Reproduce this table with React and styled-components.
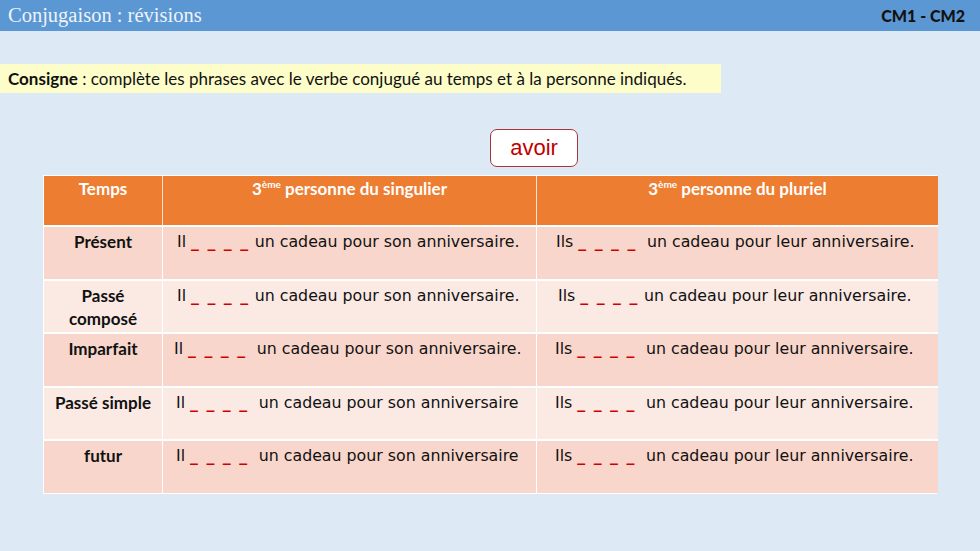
import React from "react";
import styled, { createGlobalStyle } from "styled-components";

const Global = createGlobalStyle`
  html, body { margin: 0; padding: 0; }
  body { background: #dde9f5; }
  #root { width: 980px; height: 551px; overflow: hidden; }
`;

const Page = styled.div`
  width: 980px;
  height: 551px;
  background: #dde9f5;
  display: flex;
  flex-direction: column;
`;

const TopBar = styled.header`
  height: 31px;
  background: #5b97d3;
  display: flex;
  align-items: center;
  justify-content: space-between;
  padding: 0 15px 0 8px;
`;

const Title = styled.h1`
  margin: 0;
  font-family: "Liberation Serif", "DejaVu Serif", serif;
  font-weight: normal;
  font-size: 20.5px;
  color: #eef3fa;
`;

const Level = styled.div`
  font-family: Lato, "Open Sans", sans-serif;
  font-weight: 900;
  font-size: 16px;
  color: #111;
`;

const Instruction = styled.div`
  margin-top: 33px;
  width: 721px;
  height: 29px;
  box-sizing: border-box;
  background: #fdfdc9;
  display: flex;
  align-items: center;
  padding-left: 8px;
  font-family: Lato, "Open Sans", sans-serif;
  font-size: 17px;
  color: #111;
  b { font-weight: 700; }
`;

const VerbRow = styled.div`
  display: flex;
  justify-content: center;
  margin-top: 36px;
  padding-left: 88px;
`;

const VerbBox = styled.div`
  width: 88px;
  height: 38px;
  box-sizing: border-box;
  background: #fff;
  border: 1.5px solid #a8343c;
  border-radius: 7px;
  display: flex;
  align-items: center;
  justify-content: center;
  font-family: "Liberation Sans", Arial, sans-serif;
  font-size: 22px;
  color: #c00000;
`;

const Table = styled.div`
  margin: 8px 0 0 43px;
  width: 894px;
  display: grid;
  grid-template-columns: 119px 374px 401px;
  grid-auto-rows: 53.5px;
  grid-template-rows: 49px;
  border: 1px solid #fff;
  box-sizing: border-box;
`;

const HeadCell = styled.div`
  background: #ed7d31;
  color: #fff;
  font-family: Lato, "Open Sans", sans-serif;
  font-weight: 700;
  font-size: 17px;
  text-align: center;
  padding-top: 1px;
  line-height: 23px;
  border-right: ${(p) => (p.$last ? "none" : "1.5px solid #fbe4d6")};
  box-sizing: border-box;
  sup { font-size: 10px; vertical-align: 7px; line-height: 0; }
`;

const TenseCell = styled.div`
  background: ${(p) => (p.$odd ? "#f8d6cb" : "#fbe9e4")};
  border-top: 2px solid #fff;
  border-right: 1.5px solid #fff;
  font-family: Lato, "Open Sans", sans-serif;
  font-weight: 700;
  font-size: 17px;
  color: #111;
  text-align: center;
  padding-top: 3px;
  line-height: 23px;
  box-sizing: border-box;
`;

const Sentence = styled.div`
  background: ${(p) => (p.$odd ? "#f8d6cb" : "#fbe9e4")};
  border-top: 2px solid #fff;
  border-right: ${(p) => (p.$last ? "none" : "1.5px solid #fff")};
  font-family: "DejaVu Sans", "Open Sans", sans-serif;
  font-size: 15.8px;
  color: #111;
  padding: 3px 0 0 ${(p) => p.$pad}px;
  box-sizing: border-box;
  white-space: pre;
  line-height: 23px;
`;

const Blank = styled.span`
  color: #d00000;
  font-weight: 700;
  letter-spacing: 1.5px;
`;

const rows = [
  { t: "Présent", a: [14, "Il ", " un cadeau pour son anniversaire."], b: [19, "Ils ", "  un cadeau pour leur anniversaire."] },
  { t: "Passé\ncomposé", a: [14, "Il ", " un cadeau pour son anniversaire."], b: [21, "Ils ", " un cadeau pour leur anniversaire."] },
  { t: "Imparfait", a: [11, "Il ", "  un cadeau pour son anniversaire."], b: [18, "Ils ", "  un cadeau pour leur anniversaire."] },
  { t: "Passé simple", a: [13, "Il ", "  un cadeau pour son anniversaire"], b: [18, "Ils ", "  un cadeau pour leur anniversaire."] },
  { t: "futur", a: [13, "Il ", "  un cadeau pour son anniversaire"], b: [18, "Ils ", "  un cadeau pour leur anniversaire."] },
];

export default function App() {
  return (
    <>
      <Global />
      <Page>
        <TopBar>
          <Title>Conjugaison : révisions</Title>
          <Level>CM1 - CM2</Level>
        </TopBar>
        <Instruction>
          <span>
            <b>Consigne</b> : complète les phrases avec le verbe conjugué au temps et à la personne indiqués.
          </span>
        </Instruction>
        <VerbRow>
          <VerbBox>avoir</VerbBox>
        </VerbRow>
        <Table>
          <HeadCell>Temps</HeadCell>
          <HeadCell>
            3<sup>ème</sup> personne du singulier
          </HeadCell>
          <HeadCell $last>
            3<sup>ème</sup> personne du pluriel
          </HeadCell>
          {rows.map((r, i) => (
            <React.Fragment key={i}>
              <TenseCell $odd={i % 2 === 0}>
                {r.t.split("\n").map((l, k) => (
                  <div key={k}>{l}</div>
                ))}
              </TenseCell>
              <Sentence $odd={i % 2 === 0} $pad={r.a[0]}>
                {r.a[1]}
                <Blank>_ _ _ _</Blank>
                {r.a[2]}
              </Sentence>
              <Sentence $odd={i % 2 === 0} $pad={r.b[0]} $last>
                {r.b[1]}
                <Blank>_ _ _ _</Blank>
                {r.b[2]}
              </Sentence>
            </React.Fragment>
          ))}
        </Table>
      </Page>
    </>
  );
}
